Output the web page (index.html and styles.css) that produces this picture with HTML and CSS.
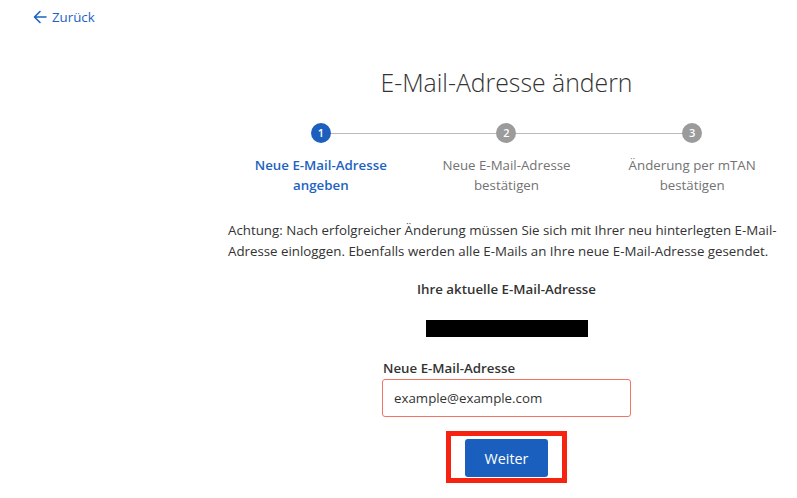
FILE: index.html
```html
<!DOCTYPE html>
<html lang="de">
<head>
<meta charset="utf-8">
<title>E-Mail-Adresse ändern</title>
<link rel="stylesheet" href="styles.css">
</head>
<body>
<header class="topbar">
  <a class="back" href="#">
    <svg class="back-icon" width="14" height="14" viewBox="0 0 14 14" aria-hidden="true"><path d="M13 7H2M7 1.5L1.5 7 7 12.5" fill="none" stroke="currentColor" stroke-width="1.6" stroke-linecap="round" stroke-linejoin="round"/></svg>
    <span>Zurück</span>
  </a>
</header>
<main class="main">
  <h1 class="title">E-Mail-Adresse ändern</h1>
  <ol class="stepper">
    <li class="step active"><span class="dot">1</span><span class="label">Neue E-Mail-Adresse<br>angeben</span></li>
    <li class="step"><span class="dot">2</span><span class="label">Neue E-Mail-Adresse<br>bestätigen</span></li>
    <li class="step"><span class="dot">3</span><span class="label">Änderung per mTAN<br>bestätigen</span></li>
  </ol>
  <p class="notice">Achtung: Nach erfolgreicher Änderung müssen Sie sich mit Ihrer neu hinterlegten E-Mail-Adresse einloggen. Ebenfalls werden alle E-Mails an Ihre neue E-Mail-Adresse gesendet.</p>
  <div class="current">
    <div class="current-label">Ihre aktuelle E-Mail-Adresse</div>
    <div class="redacted"></div>
  </div>
  <form class="form">
    <label class="field-label" for="email">Neue E-Mail-Adresse</label>
    <input class="field" id="email" type="text" value="example@example.com">
    <div class="actions">
      <button class="btn" type="button">Weiter</button>
      <span class="highlight"></span>
    </div>
  </form>
</main>
</body>
</html>
```
FILE: styles.css
```css
* { box-sizing: border-box; }
html, body { margin: 0; padding: 0; background: #fff; }
body {
  font-family: "Open Sans", "Noto Sans", sans-serif;
  font-size: 13.3px;
  color: #333;
  width: 797px;
  height: 498px;
  overflow: hidden;
}
.topbar { padding: 7px 0 0 33px; height: 27px; }
.back {
  display: inline-flex;
  align-items: center;
  gap: 5px;
  color: #1d62c1;
  text-decoration: none;
  line-height: 20px;
}
.back-icon { display: block; }
.main {
  margin-left: 228px;
  width: 557px;
  display: flex;
  flex-direction: column;
  align-items: center;
}
.title {
  margin: 39px 0 0;
  font-size: 24.8px;
  font-weight: 300;
  line-height: 32px;
  color: #333;
}
.stepper {
  list-style: none;
  margin: 25px 0 0;
  padding: 0;
  width: 100%;
  display: grid;
  grid-template-columns: repeat(3, 1fr);
}
.step {
  position: relative;
  display: flex;
  flex-direction: column;
  align-items: center;
  text-align: center;
}
.step:not(:last-child)::after {
  content: "";
  position: absolute;
  top: 10px;
  left: 50%;
  width: 100%;
  height: 1px;
  background: #b9b9b9;
  z-index: 0;
}
.dot {
  position: relative;
  z-index: 1;
  width: 20px;
  height: 20px;
  border-radius: 50%;
  background: #9b9b9b;
  color: #fff;
  font-size: 11px;
  font-weight: 600;
  line-height: 20px;
  text-align: center;
}
.step.active .dot { background: #1d5fbd; }
.label {
  margin-top: 12px;
  line-height: 20px;
  color: #737373;
}
.step.active .label { color: #1d62c1; font-weight: 600; }
.notice {
  margin: 25px 0 0;
  width: 100%;
  line-height: 21px;
  color: #333;
}
.current {
  margin-top: 17px;
  display: flex;
  flex-direction: column;
  align-items: center;
}
.current-label { font-weight: 600; line-height: 20px; }
.redacted {
  margin-top: 21px;
  width: 162px;
  height: 17px;
  background: #000;
}
.form {
  margin-top: 21px;
  width: 249px;
  display: flex;
  flex-direction: column;
}
.field-label {
  font-weight: 600;
  line-height: 20px;
  margin-bottom: 1px;
  padding-left: 1px;
}
.field {
  width: 249px;
  height: 38px;
  border: 1px solid #f07565;
  border-radius: 3px;
  padding: 0 11px;
  font-family: inherit;
  font-size: 13.3px;
  color: #333;
  outline: none;
}
.actions {
  position: relative;
  align-self: center;
  margin-top: 22px;
}
.btn {
  display: block;
  width: 83px;
  height: 38px;
  border: 0;
  border-radius: 3px;
  background: #1a5fbd;
  color: #fff;
  font-family: inherit;
  font-size: 14.3px;
  cursor: pointer;
}
.highlight {
  position: absolute;
  left: -19px;
  right: -19px;
  top: -8px;
  bottom: -6px;
  border: 5px solid #f5230f;
  pointer-events: none;
}
```
